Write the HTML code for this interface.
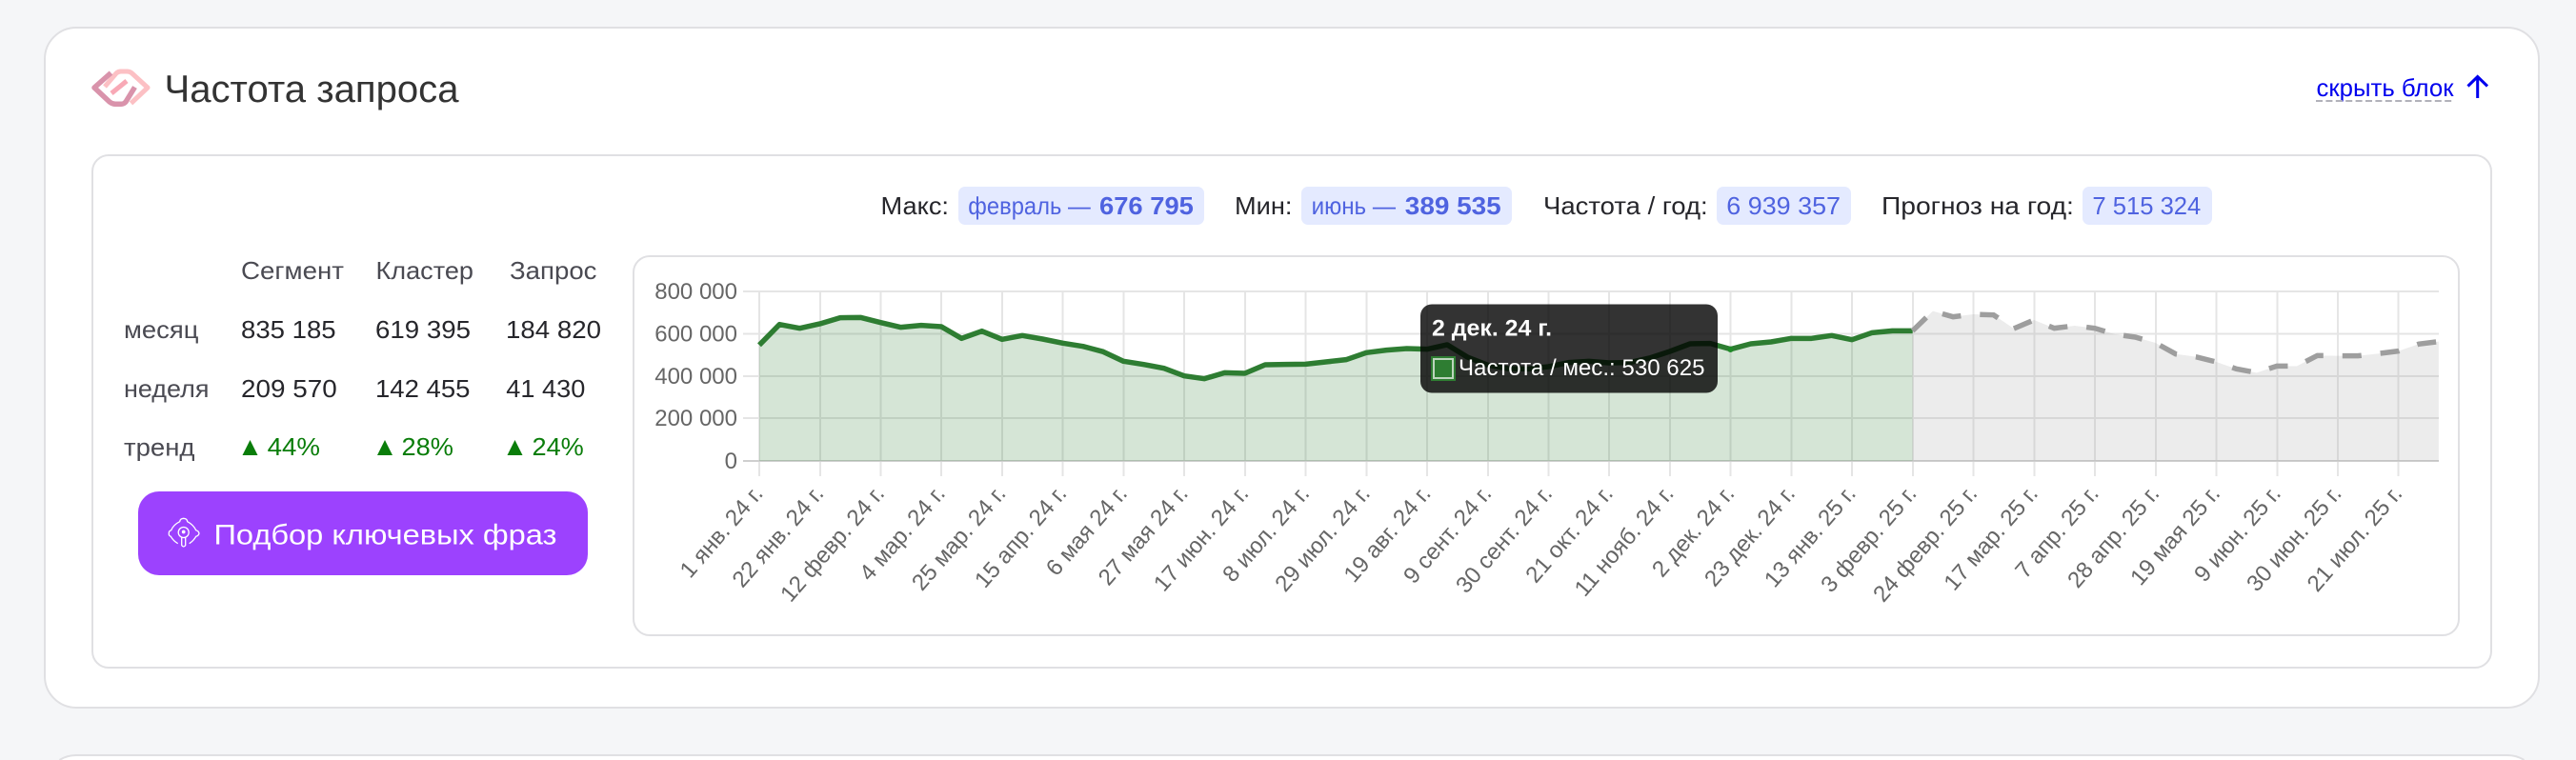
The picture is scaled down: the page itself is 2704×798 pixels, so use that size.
<!DOCTYPE html>
<html lang="ru">
<head>
<meta charset="utf-8">
<title>Частота запроса</title>
<style>
html,body{margin:0;padding:0;width:2704px;height:798px;overflow:hidden;background:#f5f6f8;font-family:"Liberation Sans","Noto Sans CJK SC",sans-serif}
#page{position:absolute;left:0;top:0;width:2704px;height:798px;overflow:hidden;background:#f5f6f8}
.card{position:absolute;box-sizing:border-box;background:#fff;border:2px solid #e0e0e3}
#outer{left:46px;top:28px;width:2620px;height:716px;border-radius:34px}
#inner{left:96px;top:162px;width:2520px;height:540px;border-radius:18px}
#chart{left:664px;top:268px;width:1918px;height:400px;border-radius:18px}
svg{position:absolute;left:0;top:0;display:block}
text{font-family:"Liberation Sans","Noto Sans CJK SC",sans-serif}
.h{font-size:26px;fill:#4a4a52}
.v{font-size:26px;fill:#26262b}
.g{font-size:26px;fill:#0a7d0a}
.l{font-size:26px;fill:#26262b}
.b{font-size:26px;fill:#4f63e0}
.y{font-size:24px;fill:#666;text-anchor:end}
.x{font-size:24px;fill:#666;text-anchor:end}
.ns{vector-effect:non-scaling-stroke}
</style>
</head>
<body>
<div id="page">
<div class="card" id="outer"></div>
<div class="card" id="inner"></div>
<div class="card" id="chart"></div>
<svg width="2704" height="798" viewBox="0 0 2704 798" xmlns="http://www.w3.org/2000/svg">
  <!-- next card (top edge only, cut by the viewport) -->
  <path d="M62.5 798A33 33 0 0 1 80 793H2632A33 33 0 0 1 2649.5 798Z" fill="#fff"/>
  <path d="M62.5 798A33 33 0 0 1 80 793H2632A33 33 0 0 1 2649.5 798" fill="none" stroke="#e0e0e3" stroke-width="2"/>

  <!-- logo -->
  <g fill="none" stroke-width="5" stroke-linejoin="round">
    <path d="M137.5 108.5 L155 92 L138 76.5 Q136 75 133 75 L127 75 Q124 75 122 77 L110 91" stroke="#fcc0c4"/>
    <path d="M117 98 L133 85" stroke="#f8a9b6"/>
    <path d="M116.5 76.5 L99 92 L115 107 Q118 109.3 121 109.3 L127 109.3 Q130 109.3 132 107 L141.5 91.5" stroke="#d993ab" stroke-width="5.5"/>
  </g>
  <text x="172.5" y="107" font-size="40" fill="#333" textLength="309" lengthAdjust="spacingAndGlyphs">Частота запроса</text>

  <!-- hide link -->
  <text x="2431.5" y="101" font-size="26" fill="#0000ee" textLength="144" lengthAdjust="spacingAndGlyphs">скрыть блок</text>
  <path d="M2431 106H2576" stroke="#b2b2ba" stroke-width="2" stroke-dasharray="7 3.4" fill="none"/>
  <path d="M2600.7 103V81M2590.5 90.5L2600.7 80.5L2611 90.5" stroke="#0000ee" stroke-width="3" fill="none"/>

  <!-- stats table -->
  <text class="h" x="253" y="293" textLength="108" lengthAdjust="spacingAndGlyphs">Сегмент</text>
  <text class="h" x="394.5" y="293" textLength="102.5" lengthAdjust="spacingAndGlyphs">Кластер</text>
  <text class="h" x="535" y="293" textLength="91.5" lengthAdjust="spacingAndGlyphs">Запрос</text>

  <text class="h" x="130" y="355" textLength="78.5" lengthAdjust="spacingAndGlyphs">месяц</text>
  <text class="v" x="253" y="355" textLength="99.6" lengthAdjust="spacingAndGlyphs">835 185</text>
  <text class="v" x="394" y="355" textLength="100" lengthAdjust="spacingAndGlyphs">619 395</text>
  <text class="v" x="531" y="355" textLength="100" lengthAdjust="spacingAndGlyphs">184 820</text>

  <text class="h" x="130" y="417" textLength="89.5" lengthAdjust="spacingAndGlyphs">неделя</text>
  <text class="v" x="253" y="417" textLength="100.7" lengthAdjust="spacingAndGlyphs">209 570</text>
  <text class="v" x="394" y="417" textLength="99.4" lengthAdjust="spacingAndGlyphs">142 455</text>
  <text class="v" x="531.3" y="417" textLength="83" lengthAdjust="spacingAndGlyphs">41 430</text>

  <text class="h" x="130" y="478.5" textLength="74.5" lengthAdjust="spacingAndGlyphs">тренд</text>
  <path d="M262.5 462L270.5 478H254.5Z M404 462L412 478H396Z M540.5 462L548.5 478H532.5Z" fill="#0a7d0a"/>
  <text class="g" x="280.6" y="478" textLength="55.4" lengthAdjust="spacingAndGlyphs">44%</text>
  <text class="g" x="421.5" y="478" textLength="54.5" lengthAdjust="spacingAndGlyphs">28%</text>
  <text class="g" x="558.5" y="478" textLength="54.3" lengthAdjust="spacingAndGlyphs">24%</text>

  <!-- button -->
  <rect x="145" y="516" width="472" height="88" rx="22" fill="#9c42fe"/>
  <g fill="none" stroke="#fff" stroke-width="1.3" stroke-linejoin="round">
    <path d="M186.7 570.7 Q182 568 179.3 563.3 Q177 562.5 177.3 560 Q177 557.5 179.7 556.7 Q182 551 188.7 547.7 Q189 544.5 192.7 544.3 Q196.4 544.5 196.7 547.7 Q203 551 205.7 556.7 Q208.6 557.5 209 560 Q208.6 562.5 205.7 563.3 Q203 568 198.7 570.7"/>
    <circle cx="192.7" cy="559" r="5.5"/>
    <circle cx="192.7" cy="558.5" r="1.2" fill="#fff"/>
    <path d="M190.7 564.2V572.5Q192.7 575.5 194.7 572.5V564.2"/>
  </g>
  <text x="224.5" y="571.5" font-size="30" fill="#fff" textLength="360" lengthAdjust="spacingAndGlyphs">Подбор ключевых фраз</text>

  <!-- summary row -->
  <text class="l" x="924.5" y="225" textLength="71.5" lengthAdjust="spacingAndGlyphs">Макс:</text>
  <rect x="1006" y="196" width="258" height="40" rx="7" fill="#e4eaff"/>
  <text class="b" x="1016.3" y="225" textLength="128.5" lengthAdjust="spacingAndGlyphs">февраль —</text>
  <text class="b" x="1154" y="225" font-weight="700" textLength="98.9" lengthAdjust="spacingAndGlyphs">676 795</text>

  <text class="l" x="1296" y="225" textLength="60.4" lengthAdjust="spacingAndGlyphs">Мин:</text>
  <rect x="1366" y="196" width="221" height="40" rx="7" fill="#e4eaff"/>
  <text class="b" x="1376.6" y="225" textLength="88.4" lengthAdjust="spacingAndGlyphs">июнь —</text>
  <text class="b" x="1474.8" y="225" font-weight="700" textLength="100.9" lengthAdjust="spacingAndGlyphs">389 535</text>

  <text class="l" x="1620" y="225" textLength="172.7" lengthAdjust="spacingAndGlyphs">Частота / год:</text>
  <rect x="1802" y="196" width="141" height="40" rx="7" fill="#e4eaff"/>
  <text class="b" x="1812.3" y="225" textLength="119.7" lengthAdjust="spacingAndGlyphs">6 939 357</text>

  <text class="l" x="1975" y="225" textLength="201.9" lengthAdjust="spacingAndGlyphs">Прогноз на год:</text>
  <rect x="2186" y="196" width="136" height="40" rx="7" fill="#e4eaff"/>
  <text class="b" x="2196.4" y="225" textLength="113.9" lengthAdjust="spacingAndGlyphs">7 515 324</text>

  <!-- grid -->
  <path fill="none" stroke="#000" stroke-opacity=".1" stroke-width="2" d="M780 306H2560M780 350.5H2560M780 395H2560M780 439H2560
  M797 306V500M861 306V500M924.5 306V500M988 306V500M1052 306V500M1115.5 306V500M1179.5 306V500M1243 306V500M1307 306V500M1370.5 306V500M1434.5 306V500M1498 306V500M1562 306V500M1625.5 306V500M1689 306V500M1753 306V500M1816.5 306V500M1880.5 306V500M1944 306V500M2008 306V500M2071.5 306V500M2135.5 306V500M2199 306V500M2263 306V500M2326.5 306V500M2390.5 306V500M2454 306V500M2517.5 306V500"/>
  <path d="M780 484H2560" stroke="#cfcfcf" stroke-width="2" fill="none"/>

  <!-- y labels -->
  <text class="y" x="774" y="314">800 000</text>
  <text class="y" x="774" y="358.5">600 000</text>
  <text class="y" x="774" y="403">400 000</text>
  <text class="y" x="774" y="447">200 000</text>
  <text class="y" x="774" y="492">0</text>

  <!-- series -->
  <g transform="translate(797,170) scale(21.24,0.33333)">
    <polygon fill="#2e7d32" fill-opacity=".2" points="0,577 1,512 2,524 3,510 4,491 5,490 6,506 7,521 8,515 9,519 10,556 11,533 12,559 13,547 14,558 15,571 16,581 17,598 18,628 19,638 20,650 21,674 22,683 23,664 24,666 25,639 26,638 27,637 28,630 29,623 30,601 31,593 32,588 33,590 34,576 35,615 36,640 37,651 38,652 39,645 40,632 41,628 42,633 43,632 44,618 45,597 46,573 47,572 48,590 49,573 50,567 51,556 52,556 53,547 54,560 55,538 56,532 57,532 57,942 0,942"/>
    <polygon fill="#9e9e9e" fill-opacity=".2" points="57,532 58,470 59,488 60,480 61,482 62,525 63,498 64,524 65,516 66,524 67,543 68,552 69,570 70,605 71,614 72,630 73,652 74,664 75,643 76,643 77,610 78,611 79,611 80,604 81,596 82,574 83,566 83,942 57,942"/>
    <polyline class="ns" fill="none" stroke="#2e7d32" stroke-width="5.5" stroke-linejoin="round" points="0,577 1,512 2,524 3,510 4,491 5,490 6,506 7,521 8,515 9,519 10,556 11,533 12,559 13,547 14,558 15,571 16,581 17,598 18,628 19,638 20,650 21,674 22,683 23,664 24,666 25,639 26,638 27,637 28,630 29,623 30,601 31,593 32,588 33,590 34,576 35,615 36,640 37,651 38,652 39,645 40,632 41,628 42,633 43,632 44,618 45,597 46,573 47,572 48,590 49,573 50,567 51,556 52,556 53,547 54,560 55,538 56,532 57,532"/>
    <polyline class="ns" fill="none" stroke="#9e9e9e" stroke-width="5.5" stroke-dasharray="20 20" points="57,532 58,470 59,488 60,480 61,482 62,525 63,498 64,524 65,516 66,524 67,543 68,552 69,570 70,605 71,614 72,630 73,652 74,664 75,643 76,643 77,610 78,611 79,611 80,604 81,596 82,574 83,566"/>
  </g>
  <circle cx="1816.5" cy="367" r="3" fill="#1f8a28"/>

  <!-- x labels -->
  <g>
    <text class="x" transform="translate(802,519) rotate(-49)">1 янв. 24 г.</text>
    <text class="x" transform="translate(865.7,519) rotate(-49)">22 янв. 24 г.</text>
    <text class="x" transform="translate(929.5,519) rotate(-49)">12 февр. 24 г.</text>
    <text class="x" transform="translate(993.2,519) rotate(-49)">4 мар. 24 г.</text>
    <text class="x" transform="translate(1056.9,519) rotate(-49)">25 мар. 24 г.</text>
    <text class="x" transform="translate(1120.7,519) rotate(-49)">15 апр. 24 г.</text>
    <text class="x" transform="translate(1184.4,519) rotate(-49)">6 мая 24 г.</text>
    <text class="x" transform="translate(1248.1,519) rotate(-49)">27 мая 24 г.</text>
    <text class="x" transform="translate(1311.8,519) rotate(-49)">17 июн. 24 г.</text>
    <text class="x" transform="translate(1375.6,519) rotate(-49)">8 июл. 24 г.</text>
    <text class="x" transform="translate(1439.3,519) rotate(-49)">29 июл. 24 г.</text>
    <text class="x" transform="translate(1503,519) rotate(-49)">19 авг. 24 г.</text>
    <text class="x" transform="translate(1566.8,519) rotate(-49)">9 сент. 24 г.</text>
    <text class="x" transform="translate(1630.5,519) rotate(-49)">30 сент. 24 г.</text>
    <text class="x" transform="translate(1694.2,519) rotate(-49)">21 окт. 24 г.</text>
    <text class="x" transform="translate(1758,519) rotate(-49)">11 нояб. 24 г.</text>
    <text class="x" transform="translate(1821.7,519) rotate(-49)">2 дек. 24 г.</text>
    <text class="x" transform="translate(1885.4,519) rotate(-49)">23 дек. 24 г.</text>
    <text class="x" transform="translate(1949.1,519) rotate(-49)">13 янв. 25 г.</text>
    <text class="x" transform="translate(2012.9,519) rotate(-49)">3 февр. 25 г.</text>
    <text class="x" transform="translate(2076.6,519) rotate(-49)">24 февр. 25 г.</text>
    <text class="x" transform="translate(2140.3,519) rotate(-49)">17 мар. 25 г.</text>
    <text class="x" transform="translate(2204.1,519) rotate(-49)">7 апр. 25 г.</text>
    <text class="x" transform="translate(2267.8,519) rotate(-49)">28 апр. 25 г.</text>
    <text class="x" transform="translate(2331.5,519) rotate(-49)">19 мая 25 г.</text>
    <text class="x" transform="translate(2395.3,519) rotate(-49)">9 июн. 25 г.</text>
    <text class="x" transform="translate(2459,519) rotate(-49)">30 июн. 25 г.</text>
    <text class="x" transform="translate(2522.7,519) rotate(-49)">21 июл. 25 г.</text>
  </g>

  <!-- tooltip -->
  <rect x="1491" y="319.5" width="312" height="93" rx="12" fill="#000" fill-opacity=".8"/>
  <text x="1503" y="352.5" font-size="24" font-weight="700" fill="#fff" textLength="126" lengthAdjust="spacingAndGlyphs">2 дек. 24 г.</text>
  <rect x="1502" y="374" width="26" height="26" fill="#2e7d32"/>
  <rect x="1505" y="377" width="20" height="20" fill="#2e7d32" stroke="#bcd4bd" stroke-width="2"/>
  <text x="1531" y="394" font-size="24" fill="#fff" textLength="258.5" lengthAdjust="spacingAndGlyphs">Частота / мес.: 530 625</text>
</svg>
</div>
</body>
</html>
